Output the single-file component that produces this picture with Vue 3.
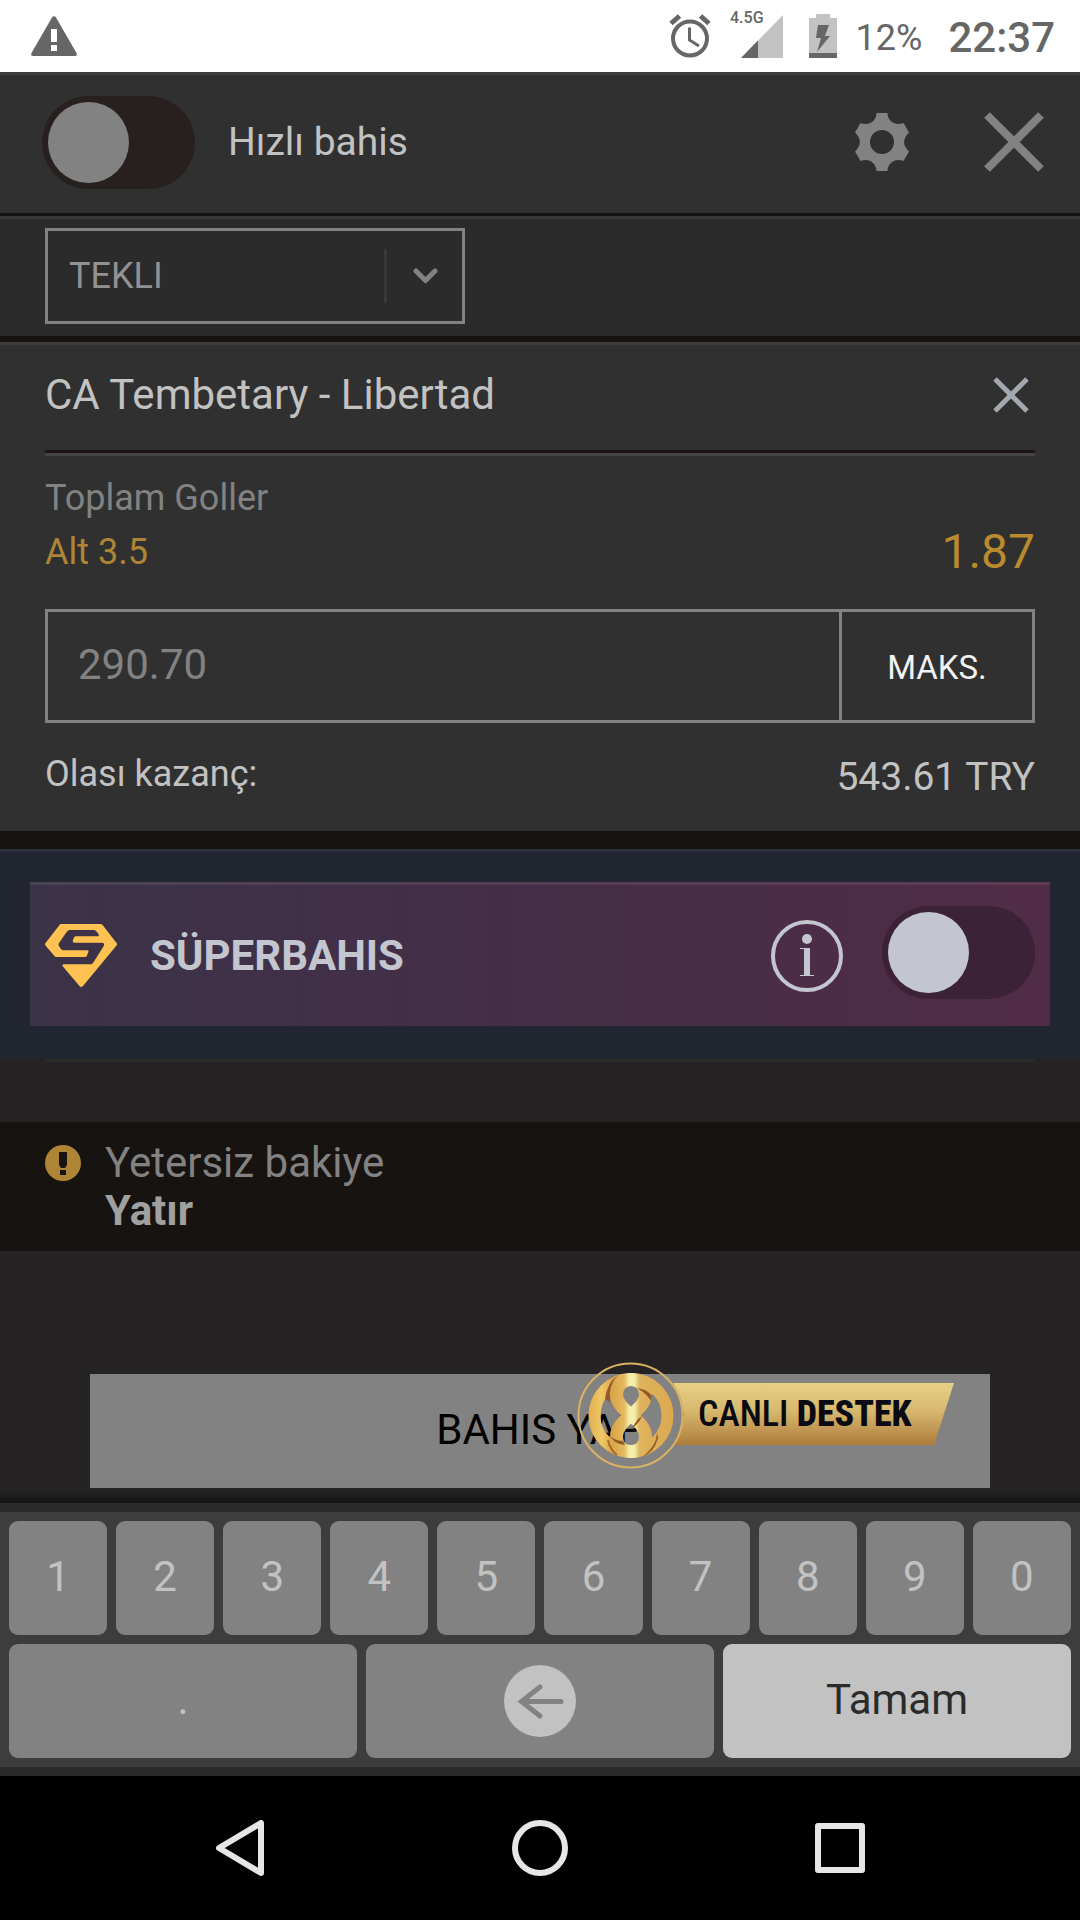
<script setup>
import { ref } from 'vue'

const digits = ['1', '2', '3', '4', '5', '6', '7', '8', '9', '0']
const quickBet = ref(false)
const superBet = ref(false)
const betType = ref('TEKLI')
const stake = ref('290.70')
</script>

<template>
  <div class="screen">
    <header class="status">
      <svg class="warn" width="46" height="40" viewBox="0 0 46 40" aria-hidden="true">
        <path d="M21 1.5Q23 -1 25 1.5L45.500 37Q46.500 40 44 40H2Q-.5 40 .5 37Z" fill="#666" />
        <path d="M20 13h6v13h-6zM20 29h6v6h-6z" fill="#fff" />
      </svg>
      <div class="status-right">
        <svg class="alarm" width="42" height="44" viewBox="0 0 42 44" fill="none" stroke="#666" aria-hidden="true">
          <circle cx="21" cy="24.500" r="17" stroke-width="4" />
          <path d="M2 9.500 10.500 2M40 9.500 31.500 2" stroke-width="5" />
          <path d="M20.500 13.500V26l9.500 6" stroke-width="3" />
        </svg>
        <svg class="signal" width="54" height="64" viewBox="0 -6 54 64" aria-hidden="true">
          <path d="M53 5V48H11Z" fill="#c2c2c2" />
          <path d="M28 30.500V48H11Z" fill="#666" />
          <text x="0" y="13" class="net">4.5G</text>
        </svg>
        <svg class="battery" width="28" height="44" viewBox="0 0 28 44" aria-hidden="true">
          <path d="M7 0h14v4h7v40H0V4h7z" fill="#c2c2c2" />
          <path d="M0 39h28v5H0zM9 11h11l-4 11h5L8 38l4-14H7z" fill="#666" />
        </svg>
        <span class="percent">12%</span>
        <span class="clock">22:37</span>
      </div>
    </header>

    <section class="quick">
      <label class="quick-label">
        <input v-model="quickBet" type="checkbox" class="toggle" />
        <span>Hızlı bahis</span>
      </label>
      <div class="quick-actions">
        <button class="icon-btn" aria-label="Ayarlar">
          <svg width="54" height="58" viewBox="0 0 54 58" aria-hidden="true">
            <path
              fill="#828282" fill-rule="evenodd"
              d="M21.500 0h11c0 8 8 13.500 16 10L54 19.500c-6.500 6-6.500 13 0 19L48.500 48c-8-3.500-16 2-16 10h-11c0-8-8-13.500-16-10L0 38.500c6.500-6 6.500-13 0-19L5.500 10c8 3.500 16-2 16-10zM27 17a12 12 0 1 0 0 24 12 12 0 0 0 0-24z"
            />
          </svg>
        </button>
        <button class="icon-btn" aria-label="Kapat">
          <svg width="60" height="60" viewBox="0 0 60 60" aria-hidden="true">
            <path d="M3 3 57 57M57 3 3 57" stroke="#828282" stroke-width="8" />
          </svg>
        </button>
      </div>
    </section>

    <section class="type-row">
      <div class="select-box">
        <select v-model="betType" aria-label="Bahis tipi">
          <option>TEKLI</option>
        </select>
        <span class="select-arrow">
          <svg width="25" height="16" viewBox="0 0 25 16" fill="none" aria-hidden="true">
            <path d="M3 3l9.500 9.500L22 3" stroke="#828282" stroke-width="5" stroke-linecap="round" stroke-linejoin="round" />
          </svg>
        </span>
      </div>
    </section>

    <section class="bet">
      <div class="bet-head">
        <h1>CA Tembetary - Libertad</h1>
        <button class="icon-btn remove" aria-label="Sil">
          <svg width="36" height="36" viewBox="0 0 36 36" aria-hidden="true">
            <path d="M2 2 34 34M34 2 2 34" stroke="#a3a7b0" stroke-width="5" />
          </svg>
        </button>
      </div>
      <div class="bet-info">
        <div class="market">
          <p>Toplam Goller</p>
          <p class="pick">Alt 3.5</p>
        </div>
        <p class="odds">1.87</p>
      </div>
      <div class="stake">
        <input v-model="stake" type="text" inputmode="decimal" aria-label="Bahis miktarı" />
        <button>MAKS.</button>
      </div>
      <div class="win">
        <span>Olası kazanç:</span>
        <span class="win-sum">543.61 TRY</span>
      </div>
    </section>

    <section class="super">
      <div class="super-card">
        <svg class="gem" width="72" height="63" viewBox="0 0 72 63" aria-hidden="true">
          <path
            fill="#ffc250"
            d="M16 0H56Q57 0 58 1.500L71.500 19Q72.500 20 71.500 21.500L38 62Q36 64 34.500 62L17.500 42Q17 40.300 19 40.300H45.500Q47 40.300 48 39L58.800 22Q60 18.700 57 18.700H30Q27 18.700 28 16L29 13.500Q29.500 12.300 31 12.300H53.700V10L51 7Q50 6 49 6H24.500Q23 6 22 7.500L14 19Q13 20.500 14 22L16 25Q17 26.300 18.500 26.300H42Q44 26.300 43.400 28L42 31.500Q41.500 33 40 33H11.500Q10 33 9 31.500L.5 21.500Q-.3 20 .5 19L14.500 1Q15 0 16 0Z"
          />
        </svg>
        <label class="super-title" for="super">SÜPERBAHIS</label>
        <button class="icon-btn info" aria-label="Bilgi">
          <svg width="72" height="72" viewBox="0 0 72 72" aria-hidden="true">
            <circle cx="36" cy="36" r="34" fill="none" stroke="#c4c6cf" stroke-width="4" />
            <circle cx="36" cy="19" r="5" fill="#c4c6cf" />
            <path d="M29 28h10v27h4v1H29v-1h4V29h-4z" fill="#c4c6cf" />
          </svg>
        </button>
        <input id="super" v-model="superBet" type="checkbox" class="toggle toggle-super" />
      </div>
    </section>

    <div class="spacer"></div>

    <section class="notice">
      <svg width="36" height="36" viewBox="0 0 36 36" aria-hidden="true">
        <circle cx="18" cy="18" r="18" fill="#ae8534" />
        <path d="M14 7h8v13l-2 3h-4l-2-3zM15 25h6v5h-6z" fill="#171311" />
      </svg>
      <div>
        <p>Yetersiz bakiye</p>
        <a href="#">Yatır</a>
      </div>
    </section>

    <section class="submit">
      <button class="place">BAHIS YAP</button>
      <a class="support" href="#">
        <svg class="emblem" width="107" height="107" viewBox="0 0 107 107" fill="none" aria-hidden="true">
          <defs>
            <linearGradient id="gold" gradientUnits="userSpaceOnUse" x1="11" y1="0" x2="97" y2="0">
              <stop offset="0" stop-color="#e0ae4d" />
              <stop offset=".16" stop-color="#f0c768" />
              <stop offset=".28" stop-color="#dba548" />
              <stop offset=".42" stop-color="#e3b95f" />
              <stop offset=".48" stop-color="#f5edab" />
              <stop offset=".54" stop-color="#f5edab" />
              <stop offset=".60" stop-color="#dfb45c" />
              <stop offset="1" stop-color="#dba850" />
            </linearGradient>
          </defs>
          <circle cx="53.500" cy="53.500" r="52" stroke="#d9b363" stroke-width="2" />
          <circle cx="54" cy="53.500" r="36.500" stroke="url(#gold)" stroke-width="12" />
          <path
            d="M54 17.500c-10 0-14.500 8-14.500 15 0 17 29 24 29 42 0 9-6 15-14.500 15s-14.500-6-14.500-15c0-18 29-25 29-42 0-7-4.500-15-14.500-15z"
            stroke="url(#gold)" stroke-width="13"
          />
          <path d="M41 13Q30 21 28 37L33 40Q31 23 41 13Z" fill="#93592a" />
          <path d="M60 26Q70 27 75 34L74 39Q69 31 60 26Z" fill="#93592a" />
          <path d="M32 72Q36 79 46 79L48 83Q36 82 32 72Z" fill="#93592a" />
          <path d="M54 67Q62 62 65 54L61 57Z" fill="#93592a" />
          <path d="M80 70Q80 84 65 95Q77 91 81 76Z" fill="#93592a" />
          <path d="M31 78Q33 88 40 93" stroke="#a66b2f" stroke-width="2" />
        </svg>
        <span class="ribbon"><span>CANLI <b>DESTEK</b></span></span>
      </a>
    </section>

    <section class="keypad">
      <div class="keys">
        <button v-for="d in digits" :key="d">{{ d }}</button>
      </div>
      <div class="keys">
        <button>.</button>
        <button class="back" aria-label="Sil">
          <svg width="72" height="72" viewBox="0 0 72 72" fill="none" aria-hidden="true">
            <circle cx="36" cy="36" r="36" fill="#c2c2c2" />
            <path d="M36 22 17.500 36.500 36 51M18 36.500H57" stroke="#828282" stroke-width="5" stroke-linecap="round" />
          </svg>
        </button>
        <button class="done">Tamam</button>
      </div>
    </section>

    <nav class="navbar">
      <button class="icon-btn" aria-label="Geri">
        <svg width="56" height="56" viewBox="0 0 56 56" fill="none" stroke="#e6e6e6" stroke-width="6" stroke-linejoin="round" aria-hidden="true">
          <path d="M49 3V53L7 28Z" />
        </svg>
      </button>
      <button class="icon-btn" aria-label="Ana ekran">
        <svg width="56" height="56" viewBox="0 0 56 56" fill="none" stroke="#e6e6e6" stroke-width="6" aria-hidden="true">
          <circle cx="28" cy="28" r="25" />
        </svg>
      </button>
      <button class="icon-btn" aria-label="Son uygulamalar">
        <svg width="56" height="56" viewBox="0 0 56 56" fill="none" stroke="#e6e6e6" stroke-width="6" stroke-linejoin="round" aria-hidden="true">
          <path d="M6 6H50V50H6Z" />
        </svg>
      </button>
    </nav>
  </div>
</template>

<style>
body {
  margin: 0;
  background: #252324;
}
</style>

<style scoped>
.screen {
  display: flex;
  flex-direction: column;
  min-height: 100vh;
  background: #252324;
  color: #c2c2c2;
  font-family: Roboto, "Liberation Sans", sans-serif;
  font-size: 36px;
}

.screen * {
  box-sizing: border-box;
}

svg {
  display: block;
  flex: none;
}

p,
h1 {
  margin: 0;
  font-weight: 400;
}

button {
  padding: 0;
  border: 0;
  background: none;
  color: inherit;
  font: inherit;
}

/* Status bar */
.status {
  display: flex;
  align-items: center;
  justify-content: space-between;
  height: 72px;
  padding: 0 25px 0 31px;
  background: #fff;
  color: #666;
}

.status-right {
  display: flex;
  align-items: center;
}

.signal {
  margin-left: 19px;
}

.net {
  fill: #666;
  font-size: 16px;
  font-weight: 500;
}

.battery {
  margin-left: 25px;
}

.percent {
  margin-left: 19px;
  padding-top: 3px;
}

.clock {
  margin-left: 26px;
  padding-top: 2px;
  font-size: 42px;
  font-weight: 500;
}

/* Quick bet */
.quick {
  display: flex;
  align-items: center;
  justify-content: space-between;
  height: 144px;
  padding: 0 36px 4px 42px;
  border-top: 3px solid #3d3d3d;
  border-bottom: 3px solid #171311;
  background: #303030;
}

.quick-label {
  display: flex;
  align-items: center;
  gap: 33px;
  font-size: 39px;
}

.quick-actions {
  display: flex;
  align-items: center;
  gap: 75px;
}

.toggle {
  appearance: none;
  flex: none;
  width: 153px;
  height: 93px;
  margin: 0;
  padding: 6px;
  border-radius: 47px;
  background: #28201f;
}

.toggle::before {
  content: "";
  display: block;
  width: 81px;
  height: 81px;
  border-radius: 50%;
  background: #828282;
}

.toggle:checked::before {
  margin-left: auto;
}

.toggle-super {
  margin-bottom: 6px;
  background: #3b2236;
}

.toggle-super::before {
  background: #c4c6cf;
}

/* Bet type */
.type-row {
  height: 126px;
  padding: 9px 45px;
  border-top: 3px solid #383838;
  border-bottom: 6px solid #171311;
  background: #2b2b2b;
}

.select-box {
  display: flex;
  align-items: center;
  width: 420px;
  height: 96px;
  border: 3px solid #828282;
}

.select-box select {
  appearance: none;
  flex: 1;
  align-self: stretch;
  padding: 0 21px;
  border: 0;
  background: transparent;
  color: #929292;
  font: inherit;
}

.select-arrow {
  display: flex;
  align-items: center;
  justify-content: center;
  width: 78px;
  height: 54px;
  padding-left: 2px;
  border-left: 3px solid #383838;
}

/* Bet card */
.bet {
  height: 507px;
  padding: 0 45px;
  border-top: 3px solid #3d3d3d;
  border-bottom: 18px solid #171311;
  background: #303030;
}

.bet-head {
  display: flex;
  align-items: center;
  justify-content: space-between;
  height: 108px;
  padding-bottom: 6px;
  border-bottom: 3px solid #1b1413;
  box-shadow: 0 3px #454545;
}

.bet-head h1 {
  font-size: 42px;
}

.remove {
  margin-right: 6px;
}

.bet-info {
  display: flex;
  align-items: flex-end;
  justify-content: space-between;
  padding-top: 18px;
}

.market {
  color: #828282;
  line-height: 54px;
}

.pick {
  color: #ae8534;
}

.odds {
  color: #b98b2e;
  font-size: 48px;
  line-height: 54px;
}

.stake {
  display: flex;
  height: 114px;
  margin-top: 30px;
  border: 3px solid #828282;
}

.stake input {
  flex: 1;
  min-width: 0;
  padding: 0 30px 4px;
  border: 0;
  background: transparent;
  color: #828282;
  font: inherit;
  font-size: 42px;
}

.stake button {
  width: 193px;
  padding-top: 2px;
  border-left: 3px solid #828282;
  color: #f2f2f2;
  font-size: 33px;
}

.win {
  display: flex;
  justify-content: space-between;
  padding-top: 24px;
  line-height: 54px;
}

.win-sum {
  padding-top: 3px;
  font-size: 39px;
}

/* Superbet */
.super {
  height: 210px;
  padding: 30px;
  border-top: 3px solid #2c303d;
  background: #222631;
}

.super-card {
  display: flex;
  align-items: center;
  height: 144px;
  padding: 0 15px;
  border-top: 3px solid rgba(255, 255, 255, 0.08);
  background: linear-gradient(90deg, #3b3348, #452e47 50%, #512c46) border-box;
}

.super-title {
  flex: 1;
  margin-left: 33px;
  color: #c4c6cf;
  font-size: 42px;
  font-weight: 700;
}

.info {
  margin-right: 39px;
}

.spacer {
  height: 63px;
  margin: 0 45px;
  border-top: 3px solid #2a2c2a;
}

/* Notice */
.notice {
  display: flex;
  gap: 24px;
  height: 129px;
  padding: 17px 45px;
  background: #171311;
  color: #828282;
  font-size: 42px;
  line-height: 48px;
}

.notice svg {
  margin-top: 6px;
}

.notice a {
  color: #a0a0a0;
  font-weight: 700;
  text-decoration: none;
}

/* Submit and live support */
.submit {
  position: relative;
  flex: 1;
  padding: 123px 90px 15px;
  background: linear-gradient(transparent calc(100% - 12px), #141414);
}

.place {
  width: 100%;
  height: 114px;
  padding-bottom: 4px;
  background: #828282;
  color: #000;
  font-size: 42px;
}

.support {
  position: absolute;
  top: 111px;
  right: 126px;
  display: flex;
  align-items: center;
  color: #090a14;
  text-decoration: none;
}

.emblem {
  position: relative;
  z-index: 1;
}

.ribbon {
  display: flex;
  align-items: center;
  width: 286px;
  height: 62px;
  margin: 0 0 3px -16px;
  padding-left: 30px;
  background: linear-gradient(#e6d084, #d7b86f 45%, #ae7c3c);
  clip-path: polygon(5px 0, 100% 0, 266px 100%, 5px 100%, 13px 75%, 16px 50%, 13px 25%);
  font-family: "Liberation Sans Narrow", "Roboto Condensed", Roboto, sans-serif;
  font-size: 36px;
  font-weight: 500;
  white-space: nowrap;
}

.ribbon b {
  font-weight: 800;
}

/* Keypad */
.keypad {
  display: flex;
  flex-direction: column;
  gap: 9px;
  padding: 9px;
  border-top: 9px solid #2b2b2b;
  border-bottom: 9px solid #2b2b2b;
  background: #3d3d3d;
}

.keys {
  display: flex;
  gap: 9px;
}

.keys button {
  display: flex;
  flex: 1 1 0;
  align-items: center;
  justify-content: center;
  height: 114px;
  padding-bottom: 4px;
  border-radius: 9px;
  background: #828282;
  font-size: 42px;
}

.keys .back {
  padding-bottom: 0;
}

.keys .done {
  background: #c2c2c2;
  color: #2b2b2b;
}

/* System navigation */
.navbar {
  display: flex;
  align-items: center;
  justify-content: center;
  gap: 244px;
  height: 144px;
  background: #000;
}
</style>
